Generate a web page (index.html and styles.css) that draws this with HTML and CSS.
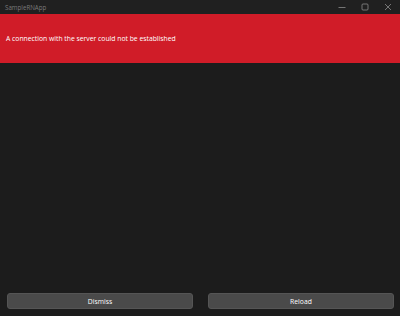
FILE: index.html
```html
<!DOCTYPE html>
<html lang="en">
<head>
    <meta charset="UTF-8">
    <meta name="viewport" content="width=device-width, initial-scale=1.0">
    <title>SampleRNApp</title>
    <link rel="stylesheet" href="styles.css">
</head>
<body>
    <div class="window">
        <div class="titlebar">
            <span class="title">SampleRNApp</span>
            <div class="controls">
                <svg class="ctl" viewBox="0 0 8 8"><path d="M0.5 4.5h7" stroke="#8c8c8c" stroke-width="0.8"/></svg>
                <svg class="ctl" viewBox="0 0 8 8"><rect x="1" y="1" width="6" height="6" rx="1" fill="none" stroke="#8c8c8c" stroke-width="0.8"/></svg>
                <svg class="ctl" viewBox="0 0 8 8"><path d="M1 1l6 6M7 1l-6 6" stroke="#8c8c8c" stroke-width="0.8"/></svg>
            </div>
        </div>

        <div class="error-banner">
            A connection with the server could not be established
        </div>

        <div class="content"></div>

        <div class="actions">
            <button class="action">Dismiss</button>
            <button class="action">Reload</button>
        </div>
    </div>
</body>
</html>
```

FILE: styles.css
```css
body {
    margin: 0;
    background-color: #1c1c1c;
    font-family: "Open Sans", "Noto Sans", sans-serif;
}
.window {
    display: flex;
    flex-direction: column;
    height: 316px;
}
.titlebar {
    height: 14px;
    background-color: #202020;
    display: flex;
    align-items: center;
    justify-content: space-between;
    padding-left: 5px;
}
.title {
    color: #7a7a7a;
    font-size: 6.2px;
}
.controls {
    display: flex;
    align-items: center;
    gap: 15px;
    padding-right: 8px;
}
.ctl {
    width: 8px;
    height: 8px;
}
.error-banner {
    height: 49px;
    background-color: #d01c28;
    color: #ffffff;
    font-size: 6.8px;
    display: flex;
    align-items: center;
    padding-left: 6px;
}
.content {
    flex: 1;
}
.actions {
    display: flex;
    gap: 15px;
    padding: 0 6px 7px 7px;
}
.action {
    flex: 1;
    height: 16px;
    background-color: #4a4a4a;
    border: 1px solid #555555;
    border-radius: 3px;
    color: #ffffff;
    font-family: "Open Sans", "Noto Sans", sans-serif;
    font-size: 6.8px;
    padding: 0;
}
```
